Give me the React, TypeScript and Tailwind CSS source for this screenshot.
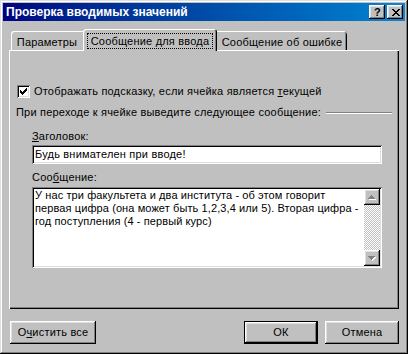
import React from "react";

const raised =
  "shadow-[inset_-1px_-1px_#000,inset_1px_1px_#fff,inset_-2px_-2px_#808080,inset_2px_2px_#dfdfdf]";
const sunken =
  "shadow-[inset_1px_1px_#808080,inset_-1px_-1px_#fff,inset_2px_2px_#000,inset_-2px_-2px_#dfdfdf]";

function CloseGlyph() {
  const rows: [number, number][][] = [
    [[0, 2], [6, 2]],
    [[1, 2], [5, 2]],
    [[2, 4]],
    [[3, 2]],
    [[2, 4]],
    [[1, 2], [5, 2]],
    [[0, 2], [6, 2]],
  ];
  return (
    <svg width="8" height="7" viewBox="0 0 8 7" shapeRendering="crispEdges">
      {rows.map((r, y) =>
        r.map(([x, w], i) => <rect key={y + "-" + i} x={x} y={y} width={w} height={1} fill="#000" />)
      )}
    </svg>
  );
}

function CheckGlyph() {
  const rects: [number, number, number][] = [
    [6, 0, 1],
    [5, 1, 2],
    [0, 2, 1],
    [4, 2, 3],
    [0, 3, 2],
    [3, 3, 3],
    [0, 4, 5],
    [1, 5, 3],
    [2, 6, 1],
  ];
  return (
    <svg width="7" height="7" viewBox="0 0 7 7" shapeRendering="crispEdges">
      {rects.map(([x, y, w], i) => (
        <rect key={i} x={x} y={y} width={w} height={1} fill="#000" />
      ))}
    </svg>
  );
}

function Arrow({ down }: { down?: boolean }) {
  const rows = [
    [3, 1],
    [2, 3],
    [1, 5],
    [0, 7],
  ];
  const list = down ? [...rows].reverse() : rows;
  return (
    <svg width="8" height="5" viewBox="0 0 8 5" shapeRendering="crispEdges">
      {list.map(([x, w], y) => (
        <rect key={"w" + y} x={x + 1} y={y + 1} width={w} height={1} fill="#fff" />
      ))}
      {list.map(([x, w], y) => (
        <rect key={"g" + y} x={x} y={y} width={w} height={1} fill="#808080" />
      ))}
    </svg>
  );
}

export default function App() {
  return (
    <div
      className={
        "w-[408px] h-[354px] bg-[#c0c0c0] p-[3px] flex flex-col text-[11px] leading-[13px] tracking-[0.2px] text-black font-['Liberation_Sans',Arial,sans-serif] shadow-[inset_-1px_-1px_#000,inset_1px_1px_#dfdfdf,inset_-2px_-2px_#808080,inset_2px_2px_#fff]"
      }
    >
      {/* Title bar */}
      <div className="h-[18px] flex items-center pl-[3px] pr-[2px] bg-gradient-to-r from-[#000080] to-[#1084d0]">
        <span className="flex-1 text-white font-bold text-[12px] leading-[14px] tracking-normal">
          Проверка вводимых значений
        </span>
        <div className={"w-[16px] h-[14px] bg-[#c0c0c0] flex items-center justify-center " + raised}>
          <span className="font-bold text-[11px] leading-[11px] pl-[1px]">?</span>
        </div>
        <div className={"ml-[2px] w-[16px] h-[14px] bg-[#c0c0c0] flex items-center justify-center pl-[1px] " + raised}>
          <CloseGlyph />
        </div>
      </div>

      {/* Tabs */}
      <div className="mt-[8px] pl-[6px] pr-[6px] flex flex-col">
        <div className="flex items-start h-[21px] pl-[2px]">
          <div className="mt-[2px] h-[19px] w-[72px] rounded-tl-[3px] shadow-[inset_1px_1px_#fff] flex items-center justify-center pt-[3px]">
            Параметры
          </div>
          <div className="relative z-10 h-[22px] w-[134px] -mb-px bg-[#c0c0c0] rounded-t-[3px] shadow-[inset_1px_1px_#fff,inset_-1px_0_#000,inset_-2px_0_#808080] flex items-start pl-[4px] pt-[4px]">
            <span className="border border-dotted border-black w-[126px] h-[16px] leading-[14px] text-center whitespace-nowrap">
              Сообщение для ввода
            </span>
          </div>
          <div className="mt-[2px] h-[19px] w-[130px] rounded-tr-[3px] shadow-[inset_0_1px_#fff,inset_-1px_0_#000,inset_-2px_0_#808080] flex items-center justify-center pt-[3px]">
            Сообщение об ошибке
          </div>
        </div>

        {/* Panel */}
        <div className="w-[390px] h-[259px] flex flex-col shadow-[inset_1px_1px_#fff,inset_-1px_-1px_#000,inset_-2px_-2px_#808080]">
          <div className="mt-[35px] ml-[8px] flex items-center h-[13px]">
            <div className={"w-[13px] h-[13px] bg-white flex items-center justify-center " + sunken}>
              <CheckGlyph />
            </div>
            <span className="ml-[4px]">
              Отображать подсказку, если ячейка является <span className="underline">т</span>екущей
            </span>
          </div>

          <div className="mt-[8px] ml-[7px] mr-[7px] flex items-center">
            <span>При переходе к ячейке выведите следующее сообщение:</span>
            <div className="flex-1 ml-[5px] h-[2px] border-t border-t-[#808080] border-b border-b-white" />
          </div>

          <div className="mt-[11px] ml-[23px]">
            <span className="underline">З</span>аголовок:
          </div>
          <div className={"mt-[2px] ml-[23px] w-[350px] h-[19px] bg-white pl-[3px] flex items-center " + sunken}>
            Будь внимателен при вводе!
          </div>

          <div className="mt-[7px] ml-[23px]">
            Соо<span className="underline">б</span>щение:
          </div>
          <div className={"mt-[3px] ml-[23px] w-[350px] h-[81px] bg-white p-[2px] flex " + sunken}>
            <div className="flex-1 min-w-0 pl-[1px] whitespace-nowrap overflow-hidden tracking-[0.1px]">
              <div>У нас три факультета и два института - об этом говорит</div>
              <div>первая цифра (она может быть 1,2,3,4 или 5). Вторая цифра -</div>
              <div>год поступления (4 - первый курс)</div>
            </div>
            <div className="w-[16px] shrink-0 flex flex-col">
              <div className={"h-[16px] bg-[#c0c0c0] flex items-center justify-center pt-[1px] " + raised}>
                <Arrow />
              </div>
              <div className="flex-1 bg-[repeating-conic-gradient(#fff_0_25%,#c0c0c0_0_50%)] bg-[length:2px_2px]" />
              <div className={"h-[16px] bg-[#c0c0c0] flex items-center justify-center pt-[1px] " + raised}>
                <Arrow down />
              </div>
            </div>
          </div>
        </div>
      </div>

      {/* Buttons */}
      <div className="mt-[12px] pl-[7px] pr-[6px] flex items-start">
        <button className={"w-[86px] h-[23px] bg-[#c0c0c0] flex items-center justify-center " + raised}>
          О<span className="underline">ч</span>истить все
        </button>
        <button className="ml-auto w-[74px] h-[23px] border border-black bg-[#c0c0c0] flex">
          <span className={"flex-1 flex items-center justify-center " + raised}>ОК</span>
        </button>
        <button className={"ml-[7px] w-[74px] h-[23px] bg-[#c0c0c0] flex items-center justify-center " + raised}>
          Отмена
        </button>
      </div>
    </div>
  );
}
